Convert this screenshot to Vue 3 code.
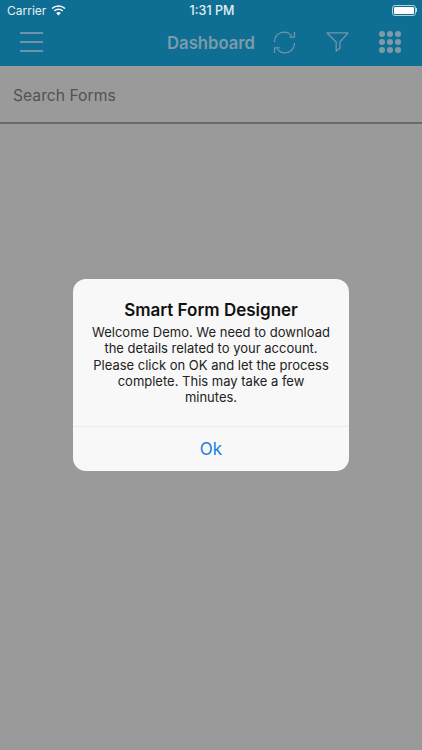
<template>
  <div class="screen">
    <header class="topbar">
      <div class="status-bar">
        <div class="status-left">
          <span>Carrier</span>
          <svg class="wifi" width="15" height="11" viewBox="0 0 15 11">
            <path d="M7.5 10.6 L5.2 8 A3.4 3.4 0 0 1 9.8 8 Z" fill="#fff" />
            <path d="M3.3 6 A6.2 6.2 0 0 1 11.7 6" fill="none" stroke="#fff" stroke-width="1.5" />
            <path d="M1 3.5 A9.6 9.6 0 0 1 14 3.5" fill="none" stroke="#fff" stroke-width="1.5" />
          </svg>
        </div>
        <span class="clock">1:31 PM</span>
        <div class="battery">
          <div class="battery-body"><div class="battery-fill"></div></div>
          <div class="battery-cap"></div>
        </div>
      </div>
      <div class="nav-bar">
        <div class="hamburger">
          <span></span>
          <span></span>
          <span></span>
        </div>
        <h1 class="nav-title">Dashboard</h1>
        <div class="nav-actions">
          <svg width="23" height="23" viewBox="0 0 24 24" fill="none" stroke="#7297a8" stroke-width="1.3">
            <path d="M1.6 11.5 A10 10 0 0 1 19.4 5" />
            <path d="M22.4 1 L22.4 6.4 L17 6.4" />
            <path d="M22.4 12.5 A10 10 0 0 1 4.6 19" />
            <path d="M1.6 23 L1.6 17.6 L7 17.6" />
          </svg>
          <svg width="23" height="20" viewBox="0 0 24 21" fill="none" stroke="#7297a8" stroke-width="1.3">
            <path d="M1 1 H23 L14.6 10.5 V17 L10.6 20 V10.5 Z" stroke-linejoin="round" />
          </svg>
          <div class="dots">
            <span v-for="n in 9" :key="n"></span>
          </div>
        </div>
      </div>
    </header>

    <div class="search-row"><span>Search Forms</span></div>

    <div class="dialog">
      <div class="dialog-body">
        <h2>Smart Form Designer</h2>
        <p>Welcome Demo. We need to download the details related to your account. Please click on OK and let the process complete. This may take a few minutes.</p>
      </div>
      <button class="dialog-btn">Ok</button>
    </div>
  </div>
</template>

<script setup>
</script>

<style>
html,
body {
  margin: 0;
  background: #9a9a9a;
}
</style>

<style scoped>
.screen {
  position: relative;
  width: 422px;
  height: 750px;
  overflow: hidden;
  background: #9a9a9a;
  font-family: Inter, "Noto Sans", sans-serif;
}

.topbar {
  height: 66px;
  background: #0e6e94;
}

.status-bar {
  height: 20px;
  display: flex;
  align-items: center;
  justify-content: space-between;
  padding: 0 5px 0 7px;
  color: #e6eef2;
  font-size: 12px;
}

.status-left {
  width: 120px;
  display: flex;
  align-items: center;
  gap: 5px;
}

.clock {
  font-size: 12.5px;
  font-weight: 500;
}

.battery {
  width: 120px;
  display: flex;
  align-items: center;
  justify-content: flex-end;
}

.battery-body {
  width: 24px;
  height: 11px;
  padding: 1px;
  border: 1px solid #b8ced8;
  border-radius: 3px;
  box-sizing: border-box;
}

.battery-fill {
  height: 100%;
  background: #fff;
  border-radius: 1px;
}

.battery-cap {
  width: 1px;
  height: 4px;
  background: #b8ced8;
}

.nav-bar {
  height: 46px;
  display: flex;
  align-items: center;
  padding: 0 20px;
}

.hamburger {
  flex: none;
  width: 23px;
  display: flex;
  flex-direction: column;
  gap: 7.5px;
  margin-top: -2px;
}

.hamburger span {
  height: 1.5px;
  background: #6e95a7;
}

.nav-title {
  flex: none;
  width: 88px;
  margin: -1px 0 0 124px;
  color: #7b9cab;
  font-size: 16.7px;
  font-weight: 600;
  white-space: nowrap;
}

.nav-actions {
  display: flex;
  align-items: center;
  gap: 30px;
  margin-left: 18px;
  margin-top: -2px;
}

.dots {
  display: grid;
  grid-template-columns: repeat(3, 6px);
  gap: 2px;
}

.dots span {
  width: 6px;
  height: 6px;
  border-radius: 50%;
  background: #7d9cab;
}

.search-row {
  height: 56px;
  padding: 0 13px;
  display: flex;
  align-items: center;
  border-bottom: 2px solid #6a6a6a;
  color: #525252;
  font-size: 15.7px;
}

.search-row span {
  margin-top: 2px;
}

.dialog {
  position: absolute;
  left: 73px;
  top: 279px;
  width: 276px;
  height: 192px;
  display: flex;
  flex-direction: column;
  background: #f8f8f8;
  border-radius: 13px;
  overflow: hidden;
}

.dialog-body {
  flex: 1;
  padding: 21px 18px 0;
  text-align: center;
  color: #111;
}

.dialog-body h2 {
  margin: 0 0 4px;
  font-size: 17px;
  line-height: 20px;
  font-weight: 600;
}

.dialog-body p {
  margin: 0;
  font-size: 13px;
  line-height: 16.3px;
  color: #222;
}

.dialog-btn {
  height: 45px;
  border: 0;
  border-top: 1px solid #ececec;
  background: transparent;
  padding: 0;
  color: #1b7fd8;
  font-family: inherit;
  font-size: 17px;
}
</style>
